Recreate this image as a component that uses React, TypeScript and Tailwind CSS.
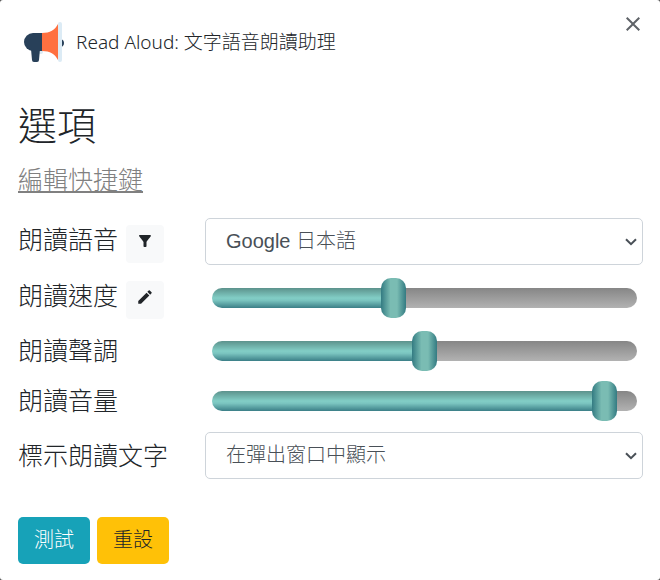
import { useState } from "react";
import { MdClose, MdEdit, MdFilterAlt } from "react-icons/md";

const THUMB = 25;

const sliderClass =
  "block h-5 w-full cursor-pointer appearance-none rounded-full bg-no-repeat outline-none " +
  "[&::-webkit-slider-thumb]:h-10 [&::-webkit-slider-thumb]:w-[25px] [&::-webkit-slider-thumb]:appearance-none " +
  "[&::-webkit-slider-thumb]:rounded-[10px] " +
  "[&::-webkit-slider-thumb]:bg-[linear-gradient(to_right,#337b82,#7abcb3_38%,#7abcb3_64%,#337b82)]";

function Slider({ id, initial }: { id: string; initial: number }) {
  const [value, setValue] = useState(initial);
  const ratio = value / 100;
  return (
    <div className="flex h-10 items-center pr-1.5 pl-[7px]">
      <input
        id={id}
        type="range"
        min={0}
        max={100}
        step={0.25}
        value={value}
        onChange={(e) => setValue(Number(e.target.value))}
        className={
          sliderClass +
          " bg-[linear-gradient(#5c928c,#82cec6_50%,#7ac4bf_62%,#3b7f87),linear-gradient(#868686,#b2b2b2)]"
        }
        style={{
          backgroundSize: `calc(${THUMB / 2}px + (100% - ${THUMB}px) * ${ratio}) 100%, 100% 100%`,
        }}
      />
    </div>
  );
}

function Select({ id, option }: { id: string; option: string }) {
  return (
    <div className="relative">
      <select
        id={id}
        className="block h-[47px] w-full appearance-none rounded-[5px] border border-[#ced4da] bg-white pr-8 pb-0.5 pl-5 text-xl text-[#495057]"
      >
        <option>{option}</option>
      </select>
      <svg
        viewBox="0 0 12 8"
        className="pointer-events-none absolute top-5 right-1.5 h-2 w-3 fill-none stroke-[#495057] stroke-2"
        aria-hidden="true"
      >
        <path d="M1 1.2l5 5 5-5" />
      </svg>
    </div>
  );
}

const labelClass = "text-[25px] leading-[38px] whitespace-nowrap";
const rowClass = "grid grid-cols-[187px_1fr] items-center";
const iconButtonClass =
  "mt-1 flex size-[38px] items-center justify-center rounded bg-[#f8f9fa] pb-1.5 text-[#212529]";
const buttonClass = "h-[47px] w-[72px] rounded-[5px] pb-0.5 text-xl";

function Logo() {
  return (
    <svg viewBox="0 0 40 40" className="size-10" aria-hidden="true">
      <path d="M37 17q3 1 3 4t-3 4z" fill="#284059" />
      <path d="M16 28h3v2q0 2-2 2h-2z" fill="#dcebf5" />
      <path d="M7 27h9l-1 11q0 2-2 2h-3q-2 0-2-2z" fill="#284059" />
      <path d="M18 11H9a9 9 0 0 0 0 18h9z" fill="#284059" />
      <path d="M18 11c8 0 13-3 16-9v36c-3-6-8-9-16-9z" fill="#ff7040" />
      <rect x="34" y="0" width="4" height="40" rx="2" fill="#dcebf5" />
    </svg>
  );
}

export default function App() {
  return (
    <div className="min-h-screen bg-[#505050]">
      <main className="relative min-h-screen rounded-[3px] bg-white pt-[22px] pr-[17px] pb-4 pl-[18px] font-['Liberation_Sans','Noto_Sans_CJK_TC',sans-serif] font-light text-[#212529]">
        <button
          type="button"
          aria-label="Close"
          className="absolute top-3 right-[15px] text-[#5f6368]"
        >
          <MdClose className="size-6" />
        </button>

        <header className="flex items-center gap-3 pl-1.5">
          <Logo />
          <span className="font-['Noto_Sans','Noto_Sans_CJK_TC',sans-serif] text-[19px] leading-7">
            Read Aloud: 文字語音朗讀助理
          </span>
        </header>

        <h1 className="mt-[41px] text-[39px] leading-12">選項</h1>
        <a
          href="#shortcuts"
          className="mt-[11px] block w-fit text-[25px] leading-9 text-[#808080] underline underline-offset-2"
        >
          編輯快捷鍵
        </a>

        <form className="mt-5" onSubmit={(e) => e.preventDefault()}>
          <div className={rowClass}>
            <div className="flex items-start gap-2">
              <label htmlFor="voice" className={labelClass}>
                朗讀語音
              </label>
              <button type="button" aria-label="Filter" className={iconButtonClass}>
                <MdFilterAlt className="size-[18px]" />
              </button>
            </div>
            <Select id="voice" option="Google 日本語" />
          </div>

          <div className={rowClass + " mt-3"}>
            <div className="flex items-start gap-2">
              <label htmlFor="rate" className={labelClass}>
                朗讀速度
              </label>
              <button type="button" aria-label="Edit" className={iconButtonClass}>
                <MdEdit className="size-[18px]" />
              </button>
            </div>
            <Slider id="rate" initial={42.25} />
          </div>

          <div className={rowClass + " mt-3"}>
            <label htmlFor="pitch" className={labelClass}>
              朗讀聲調
            </label>
            <Slider id="pitch" initial={50} />
          </div>

          <div className={rowClass + " mt-2.5"}>
            <label htmlFor="volume" className={labelClass}>
              朗讀音量
            </label>
            <Slider id="volume" initial={95} />
          </div>

          <div className={rowClass + " mt-[11px]"}>
            <label htmlFor="highlight" className={labelClass}>
              標示朗讀文字
            </label>
            <Select id="highlight" option="在彈出窗口中顯示" />
          </div>

          <div className="mt-[38px] flex gap-[7px]">
            <button type="button" className={buttonClass + " bg-[#17a2b8] text-white"}>
              測試
            </button>
            <button type="reset" className={buttonClass + " bg-[#ffc107]"}>
              重設
            </button>
          </div>
        </form>
      </main>
    </div>
  );
}
